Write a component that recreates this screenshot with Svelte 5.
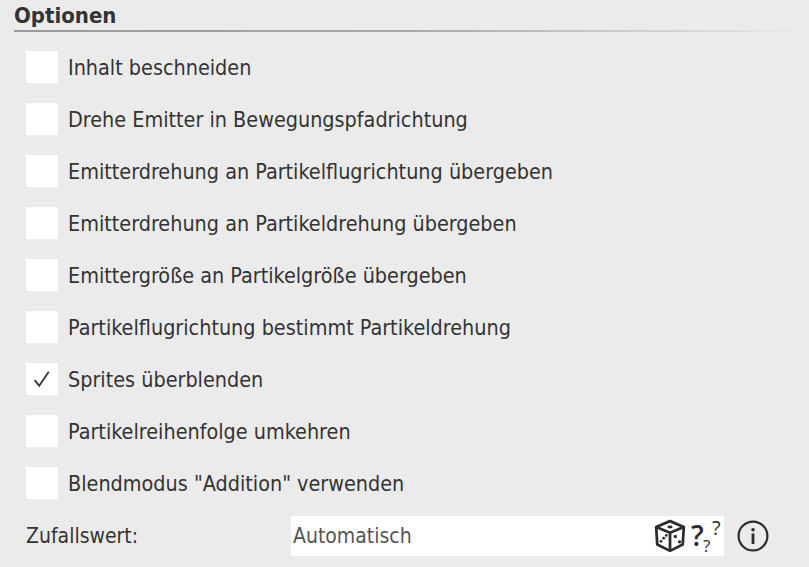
<script>
  const options = [
    { label: 'Inhalt beschneiden', checked: false },
    { label: 'Drehe Emitter in Bewegungspfadrichtung', checked: false },
    { label: 'Emitterdrehung an Partikelflugrichtung übergeben', checked: false },
    { label: 'Emitterdrehung an Partikeldrehung übergeben', checked: false },
    { label: 'Emittergröße an Partikelgröße übergeben', checked: false },
    { label: 'Partikelflugrichtung bestimmt Partikeldrehung', checked: false },
    { label: 'Sprites überblenden', checked: true },
    { label: 'Partikelreihenfolge umkehren', checked: false },
    { label: 'Blendmodus "Addition" verwenden', checked: false }
  ];
</script>

<div class="panel">
  <div class="title">Optionen</div>
  <div class="rule"></div>
  <div class="list">
    {#each options as o}
      <div class="row">
        <span class="box">
          {#if o.checked}
            <svg width="18" height="18" viewBox="0 0 16 16"><path d="M1.5 9 L5.5 14 L14 1.5" fill="none" stroke="#333" stroke-width="1.6"/></svg>
          {/if}
        </span>
        <span class="label">{o.label}</span>
      </div>
    {/each}
  </div>
  <div class="seed">
    <span class="seedlabel">Zufallswert:</span>
    <div class="input">
      <span class="value">Automatisch</span>
      <svg class="dice" width="34" height="34" viewBox="0 0 32 32" fill="none" stroke="#2c2c2c" stroke-width="2.6" stroke-linejoin="round">
        <path d="M16 2 L29 7.5 L28 24 L16 30 L4 24 L3 7.5 Z"/>
        <path d="M3 7.5 L16 13 L29 7.5 M16 13 V30"/>
        <g fill="#2c2c2c" stroke="none">
          <ellipse cx="16" cy="7.5" rx="2.4" ry="1.4"/>
          <circle cx="7.5" cy="21" r="1.3"/><circle cx="10" cy="18" r="1.3"/><circle cx="12.5" cy="15.5" r="1.3"/>
          <circle cx="21" cy="16.5" r="1.6"/><circle cx="25" cy="21.5" r="1.6"/>
        </g>
      </svg>
      <span class="q q1">?</span><span class="q q2">?</span><span class="q q3">?</span>
    </div>
    <svg class="info" width="32" height="32" viewBox="0 0 32 32" fill="none">
      <circle cx="16" cy="16" r="14.4" stroke="#2c2c2c" stroke-width="2.2"/>
      <circle cx="16" cy="9.8" r="1.8" fill="#2c2c2c"/>
      <rect x="14.6" y="13.5" width="2.8" height="10.5" fill="#2c2c2c"/>
    </svg>
  </div>
</div>

<style>
  :global(body) {
    margin: 0;
    background: #ebebeb;
  }
  .panel {
    width: 809px;
    height: 567px;
    overflow: hidden;
    box-sizing: border-box;
    padding: 4px 0 0 14px;
    font-family: "DejaVu Sans", sans-serif;
    font-stretch: condensed;
    color: #333;
  }
  .title {
    font-weight: bold;
    font-size: 22px;
    line-height: 23px;
    color: #333;
  }
  .rule {
    height: 2px;
    margin-top: 3px;
    background: linear-gradient(to right, #9a9a9a 0%, #a8a8a8 50%, #ebebeb 100%);
  }
  .list {
    display: flex;
    flex-direction: column;
    gap: 20px;
    padding: 19px 0 0 12px;
  }
  .row {
    display: flex;
    align-items: center;
    height: 32px;
  }
  .box {
    width: 32px;
    height: 32px;
    background: #fff;
    display: flex;
    align-items: center;
    justify-content: center;
    flex: none;
  }
  .label {
    margin-left: 10px;
    font-size: 21.4px;
    white-space: nowrap;
  }
  .seed {
    display: flex;
    align-items: center;
    margin: 17px 0 0 12px;
    height: 40px;
    font-size: 21px;
  }
  .seedlabel {
    width: 265px;
  }
  .input {
    position: relative;
    width: 433px;
    height: 40px;
    background: #fff;
    display: flex;
    align-items: center;
  }
  .value {
    margin-left: 2px;
    color: #555;
  }
  .dice {
    position: absolute;
    left: 362px;
    top: 3px;
  }
  .q {
    position: absolute;
    font-family: "Open Sans", sans-serif;
    font-stretch: normal;
    color: #2c2c2c;
    line-height: 1;
  }
  .q1 { left: 400px; top: 5px; font-size: 28px; font-weight: 600; }
  .q2 { left: 412px; top: 21px; font-size: 17px; font-weight: 500; }
  .q3 { left: 421px; top: 2px; font-size: 20px; font-weight: 500; }
  .info {
    margin-left: 13px;
  }
</style>
